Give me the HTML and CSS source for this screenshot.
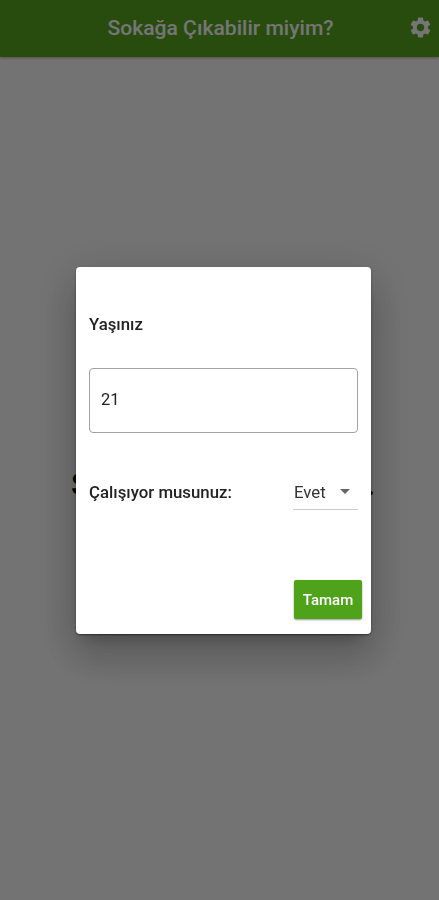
FILE: index.html
```
<!DOCTYPE html>
<html lang="tr">
<head>
  <meta charset="UTF-8" />
  <meta name="viewport" content="width=device-width, initial-scale=1.0"/>
  <title>Sokağa Çıkabilir miyim?</title>
  <link rel="stylesheet" href="styles.css">
</head>
<body>

  <header class="app-bar">
    <h1 class="app-title">Sokağa Çıkabilir miyim?</h1>
    <svg class="settings-icon" viewBox="0 0 24 24">
      <path d="M19.14 12.94c.04-.3.06-.61.06-.94 0-.32-.02-.64-.07-.94l2.03-1.58c.18-.14.23-.41.12-.61l-1.92-3.32c-.12-.22-.37-.29-.59-.22l-2.39.96c-.5-.38-1.03-.7-1.62-.94l-.36-2.54c-.04-.24-.24-.41-.48-.41h-3.84c-.24 0-.43.17-.47.41l-.36 2.54c-.59.24-1.13.57-1.62.94l-2.39-.96c-.22-.08-.47 0-.59.22L2.74 8.87c-.12.21-.08.47.12.61l2.03 1.58c-.05.3-.09.63-.09.94s.02.64.07.94l-2.03 1.58c-.18.14-.23.41-.12.61l1.92 3.32c.12.22.37.29.59.22l2.39-.96c.5.38 1.03.7 1.62.94l.36 2.54c.05.24.24.41.48.41h3.84c.24 0 .44-.17.47-.41l.36-2.54c.59-.24 1.13-.56 1.62-.94l2.39.96c.22.08.47 0 .59-.22l1.92-3.32c.12-.22.07-.47-.12-.61l-2.01-1.58zM12 15.6c-1.98 0-3.6-1.62-3.6-3.6s1.62-3.6 3.6-3.6 3.6 1.62 3.6 3.6-1.62 3.6-3.6 3.6z"/>
    </svg>
  </header>

  <main class="result">
    <span>S</span>
    <span>.</span>
  </main>

  <div class="overlay">
    <form class="dialog">
      <label class="label" for="age">Yaşınız</label>
      <input class="age-input" id="age" type="text" value="21">

      <div class="work-row">
        <span class="label">Çalışıyor musunuz:</span>
        <div class="dropdown">
          <span>Evet</span>
          <span class="arrow"></span>
        </div>
      </div>

      <button class="ok-button" type="button">Tamam</button>
    </form>
  </div>

</body>
</html>
```

FILE: styles.css
```
* {
  box-sizing: border-box;
}

body {
  margin: 0;
  height: 900px;
  display: flex;
  flex-direction: column;
  overflow: hidden;
  font-family: Roboto, sans-serif;
  background-color: #fafafa;
  color: #000;
}

.app-bar {
  flex: none;
  height: 57px;
  padding: 0 6px 3px 33px;
  display: flex;
  align-items: center;
  background-color: #57a51e;
  color: #fff;
  box-shadow: 0 1px 3px rgba(0,0,0,0.3);
}

.app-title {
  flex: 1;
  margin: 0;
  padding-top: 1px;
  font-size: 21.1px;
  font-weight: 500;
  text-align: center;
}

.settings-icon {
  width: 25px;
  height: 25px;
  fill: #fff;
}

.result {
  flex: 1;
  display: flex;
  align-items: center;
  justify-content: space-between;
  padding: 11px 64px 0 71px;
  font-size: 31px;
  font-weight: 500;
}

.overlay {
  position: fixed;
  inset: 0;
  display: flex;
  align-items: center;
  justify-content: center;
  padding: 1px 0 0 8px;
  background-color: rgba(0,0,0,0.54);
}

.dialog {
  width: 295px;
  height: 367px;
  padding: 46px 13px 15px;
  display: flex;
  flex-direction: column;
  background-color: #fff;
  border-radius: 4px;
  box-shadow: 0 11px 15px -7px rgba(0,0,0,0.2),
              0 24px 38px 3px rgba(0,0,0,0.14),
              0 9px 46px 8px rgba(0,0,0,0.12),
              0 1px 2px rgba(0,0,0,0.5);
}

.label {
  font-size: 16.8px;
  font-weight: 500;
  line-height: 22px;
  color: #222;
}

.age-input {
  width: 100%;
  height: 65px;
  margin-top: 33px;
  padding: 0 11px 2px;
  border: 1px solid #a2a2a2;
  border-radius: 4px;
  font-family: inherit;
  font-size: 16.5px;
  color: #222;
  outline: none;
}

.work-row {
  margin-top: 40px;
  display: flex;
  align-items: flex-start;
  justify-content: space-between;
}

.work-row .label {
  padding-top: 8px;
}

.dropdown {
  width: 65px;
  height: 37px;
  padding: 1px 8px 0 1px;
  display: flex;
  align-items: center;
  justify-content: space-between;
  border-bottom: 1px solid #ccc;
  font-size: 16.8px;
  color: #333;
}

.arrow {
  border: 5px solid transparent;
  border-top-color: #666;
  border-bottom: none;
}

.ok-button {
  width: 68px;
  height: 39px;
  margin: auto -4px 0 auto;
  padding: 0;
  border: none;
  border-radius: 2px;
  background-color: #4fa31a;
  box-shadow: 0 1px 2px rgba(0,0,0,0.4);
  font-family: inherit;
  font-size: 15px;
  font-weight: 500;
  color: #fff;
}
```
